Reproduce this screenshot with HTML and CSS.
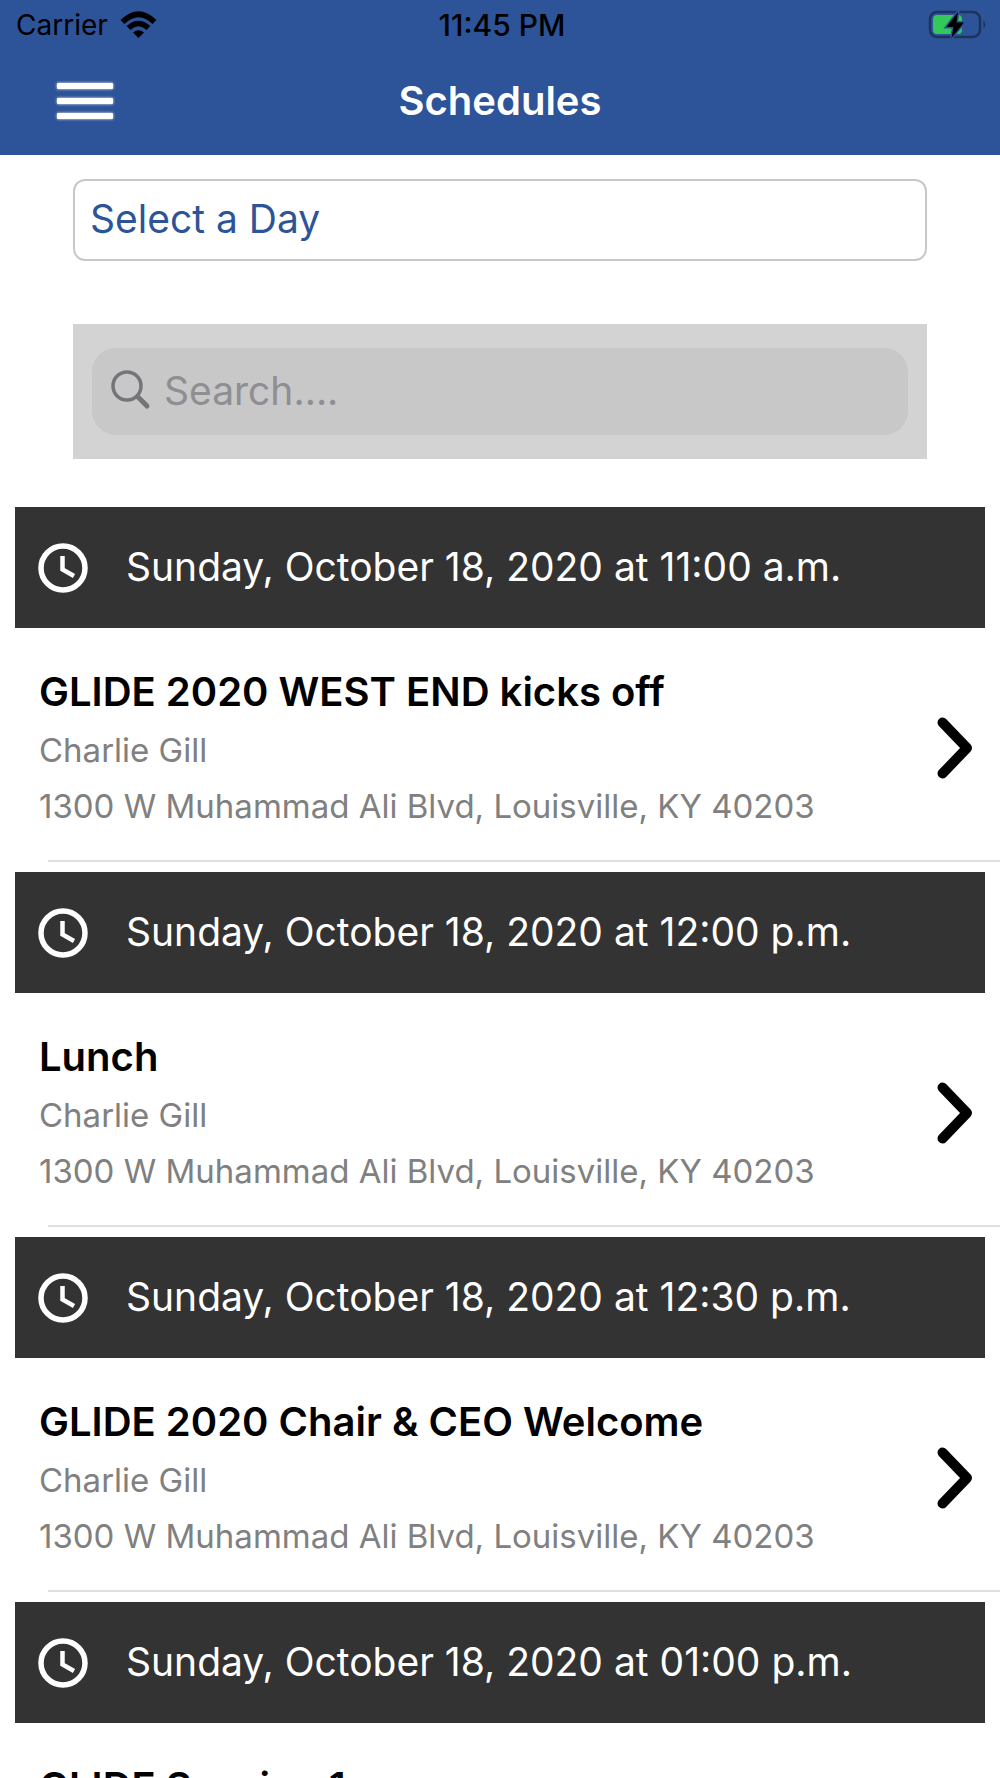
FILE: index.html
```html
<!DOCTYPE html>
<html lang="en">
	<head>
		<meta charset="UTF-8">
		<title>Schedules</title>
		<link rel="stylesheet" href="styles.css">
	</head>
	<body>
		<svg class="defs" aria-hidden="true">
			<symbol id="clock" viewBox="0 0 50 50">
				<circle cx="25" cy="25" r="22" fill="none" stroke="#fff" stroke-width="5.500"/>
				<path d="M24.500 13V26.500L36 33" fill="none" stroke="#fff" stroke-width="4.500"/>
			</symbol>
			<symbol id="arrow" viewBox="0 0 36 62">
				<path d="M5.500 5.500L30 31L5.500 56.500" fill="none" stroke="#000" stroke-width="10" stroke-linecap="round" stroke-linejoin="round"/>
			</symbol>
		</svg>

		<div class="header">
			<div class="status">
				<div class="carrier">
					<span>Carrier</span>
					<svg width="37" height="28" viewBox="0 0 37 28">
						<path d="M2.500 11Q18.500 -4.500 34.500 11" fill="none" stroke="#000" stroke-width="5.500"/>
						<path d="M8.500 17Q18.500 8 28.500 17" fill="none" stroke="#000" stroke-width="5.500"/>
						<path d="M13 21.500Q18.500 17 24 21.500L18.500 27Z"/>
					</svg>
				</div>
				<div class="time">11:45 PM</div>
				<div class="battery">
					<svg width="60" height="30" viewBox="0 0 60 30">
						<rect x="2" y="2" width="50" height="25" rx="7" fill="none" stroke="#1c345c" stroke-width="2.500"/>
						<rect x="5" y="5" width="29" height="19" rx="4" fill="#34c759"/>
						<path d="M55.500 10Q59 14.500 55.500 19Z" fill="#1c345c"/>
						<path d="M30 2L18.500 17H25.500L23.500 28L36 12.500H28.500Z" stroke="#2d5398" stroke-width="3" paint-order="stroke"/>
					</svg>
				</div>
			</div>
			<div class="nav">
				<button class="menu" type="button" aria-label="Menu">
					<i></i>
					<i></i>
					<i></i>
				</button>
				<h1>Schedules</h1>
			</div>
		</div>

		<form class="filter">
			<select class="day" aria-label="Day">
				<option>Select a Day</option>
			</select>
			<div class="search">
				<label class="searchBox">
					<svg width="40" height="40" viewBox="0 0 40 40">
						<circle cx="16" cy="16" r="14" fill="none" stroke="#757579" stroke-width="3.500"/>
						<path d="M27 27L36 36" stroke="#757579" stroke-width="5" stroke-linecap="round"/>
					</svg>
					<input type="text" placeholder="Search...." aria-label="Search">
				</label>
			</div>
		</form>

		<ul class="list">
			<li>
				<div class="date"><svg><use href="#clock"/></svg><span>Sunday, October 18, 2020 at 11:00 a.m.</span></div>
				<a class="item" href="#">
					<div class="info">
						<h2>GLIDE 2020 WEST END kicks off</h2>
						<p>Charlie Gill</p>
						<p>1300 W Muhammad Ali Blvd, Louisville, KY 40203</p>
					</div>
					<svg><use href="#arrow"/></svg>
				</a>
			</li>
			<li>
				<div class="date"><svg><use href="#clock"/></svg><span>Sunday, October 18, 2020 at 12:00 p.m.</span></div>
				<a class="item" href="#">
					<div class="info">
						<h2>Lunch</h2>
						<p>Charlie Gill</p>
						<p>1300 W Muhammad Ali Blvd, Louisville, KY 40203</p>
					</div>
					<svg><use href="#arrow"/></svg>
				</a>
			</li>
			<li>
				<div class="date"><svg><use href="#clock"/></svg><span>Sunday, October 18, 2020 at 12:30 p.m.</span></div>
				<a class="item" href="#">
					<div class="info">
						<h2>GLIDE 2020 Chair &amp; CEO Welcome</h2>
						<p>Charlie Gill</p>
						<p>1300 W Muhammad Ali Blvd, Louisville, KY 40203</p>
					</div>
					<svg><use href="#arrow"/></svg>
				</a>
			</li>
			<li>
				<div class="date"><svg><use href="#clock"/></svg><span>Sunday, October 18, 2020 at 01:00 p.m.</span></div>
				<a class="item" href="#">
					<div class="info">
						<h2>GLIDE Session 1</h2>
					</div>
				</a>
			</li>
		</ul>
	</body>
</html>
```
FILE: styles.css
```css
*{
	padding: 0;
	margin: 0;
	box-sizing: border-box;
}
body{
	height: 100vh;
	display: flex;
	flex-direction: column;
	overflow: hidden;
	background: white;
	color: black;
	font-family: Inter, "Liberation Sans", sans-serif;
}
svg{
	display: block;
	flex: none;
}
.defs{
	position: absolute;
	width: 0;
	height: 0;
}
/* header */
.header{
	flex: none;
	background: #2d5398;
}
.status{
	height: 50px;
	padding: 0 12px 0 16px;
	display: grid;
	grid-template-columns: 1fr auto 1fr;
	align-items: center;
	font-size: 28px;
}
.carrier{
	display: flex;
	align-items: center;
	gap: 12px;
}
.time{
	font-size: 30px;
	font-weight: 500;
}
.battery{
	justify-self: end;
}
.nav{
	height: 105px;
	padding: 0 57px 4px;
	display: grid;
	grid-template-columns: 1fr auto 1fr;
	align-items: center;
	color: white;
}
.nav h1{
	font-size: 40px;
	font-weight: 600;
}
.menu{
	width: 56px;
	display: flex;
	flex-direction: column;
	gap: 9px;
	border: 0;
	background: none;
}
.menu i{
	height: 6px;
	border-radius: 1px;
	background: white;
	box-shadow: 0 0 3px white;
}
/* filter */
.filter{
	flex: none;
	padding: 24px 73px 48px;
}
.day{
	display: block;
	width: 100%;
	height: 82px;
	padding: 0 15px 4px;
	border: 2px solid #c8c8c8;
	border-radius: 12px;
	background: white;
	color: #2d5398;
	font: 39px Inter, "Liberation Sans", sans-serif;
	appearance: none;
}
.search{
	margin-top: 63px;
	padding: 24px 19px;
	background: #d3d3d3;
}
.searchBox{
	height: 87px;
	padding: 0 19px 3px;
	display: flex;
	align-items: center;
	gap: 13px;
	border-radius: 24px;
	background: #c8c8c8;
}
.searchBox input{
	flex: 1;
	min-width: 0;
	border: 0;
	outline: none;
	background: none;
	font: 39px Inter, "Liberation Sans", sans-serif;
}
.searchBox input::placeholder{
	color: #8e8e93;
}
/* list */
.list{
	flex: 1;
	min-height: 0;
	overflow: hidden;
	list-style: none;
}
.list li{
	margin-bottom: 10px;
}
.date{
	height: 121px;
	margin: 0 15px;
	padding: 0 23px;
	display: flex;
	align-items: center;
	gap: 38px;
	background: #333;
	color: white;
	font-size: 39px;
}
.date svg{
	width: 50px;
	height: 50px;
}
.date span{
	padding-bottom: 3px;
}
.item{
	padding: 34px 27px 26px 39px;
	display: flex;
	align-items: center;
	justify-content: space-between;
	color: black;
	text-decoration: none;
}
.item svg{
	width: 36px;
	height: 62px;
}
.list li::after{
	content: "";
	display: block;
	height: 2px;
	margin-left: 48px;
	background: #e0e0e0;
}
.info h2{
	font-size: 40px;
	font-weight: 600;
	line-height: 60px;
}
.info p{
	color: #808080;
	font-size: 33px;
	line-height: 56px;
}
```
